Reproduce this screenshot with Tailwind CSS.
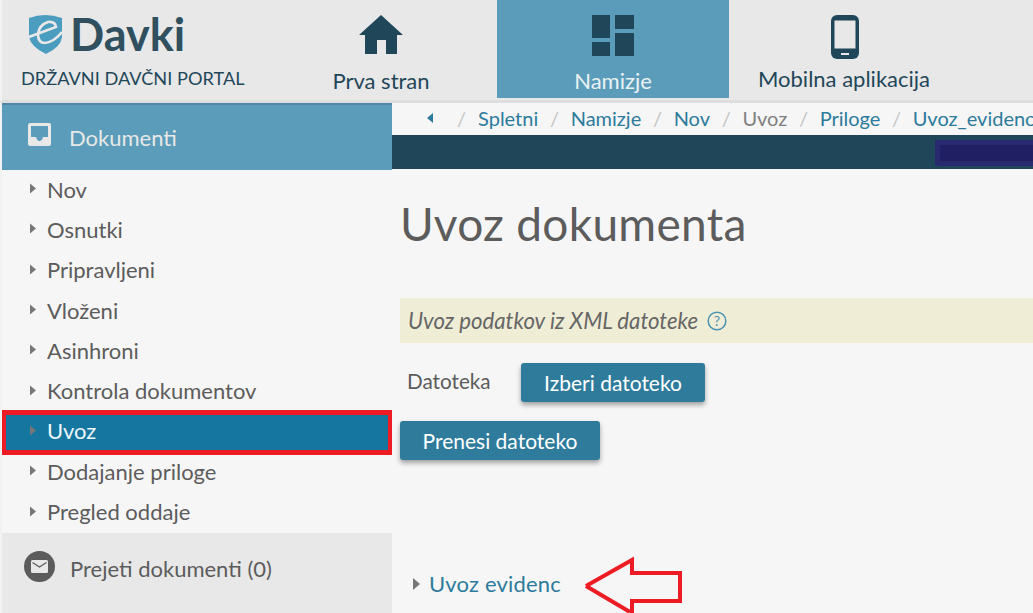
<!DOCTYPE html>
<html lang="en">
<head>
  <meta charset="UTF-8">
  <title>eDavki - Uvoz dokumenta</title>
  <script src="https://cdn.jsdelivr.net/npm/@tailwindcss/browser@4"></script>
</head>
<body class="relative w-[1033px] h-[613px] overflow-hidden bg-[#f6f6f6] font-['Lato','Noto_Sans',sans-serif] text-[#5c5c5c]">

  <!-- Header -->
  <header class="h-[103px] flex bg-[#e8e8e8] border-l-2 border-[#f2f2f2] border-b-[3px] border-b-[#dedede]">
    <div class="w-[263px] shrink-0 pl-[19px] pt-[13px]">
      <div class="flex items-center h-[42px] pl-[8px] gap-[8px]">
        <svg class="w-[33px] h-[42px]" viewBox="0 0 33 42">
          <path d="M0 5 Q16 -1 33 5 V24 Q32 34 17 41 Q2 34 0 24 Z" fill="#4a9dbf"/>
          <path d="M0 24 L27 14 Q26 8 19 9 Q10 12 9 21 Q9 30 16 30 Q25 29 33 19" fill="none" stroke="#e8e8e8" stroke-width="2.600"/>
        </svg>
        <span class="text-[45px] leading-none font-bold text-[#30505f]">Davki</span>
      </div>
      <div class="mt-[13px] text-[18.200px] leading-[20px] text-[#1f4759] whitespace-nowrap">DRŽAVNI DAVČNI PORTAL</div>
    </div>

    <a class="w-[232px] flex flex-col items-center pt-[15px] text-[#1f4759]">
      <svg class="w-[44px] h-[39px]" viewBox="0 0 44 39"><path d="M22 0 L44 20 H38 V39 H27 V25 H18 V39 H6 V20 H0 Z" fill="#1f4759"/></svg>
      <span class="mt-[13px] text-[22px] leading-[28px]">Prva stran</span>
    </a>

    <a class="w-[232px] h-[98px] flex flex-col items-center pt-[15px] bg-[#5a9cb9] text-[#eaf2f5]">
      <svg class="w-[42px] h-[41px]" viewBox="0 0 42 41" fill="#1f4759">
        <rect x="0" y="0" width="18" height="23"/><rect x="23" y="0" width="19" height="14"/>
        <rect x="0" y="27" width="18" height="14"/><rect x="23" y="18" width="19" height="23"/>
      </svg>
      <span class="mt-[11px] text-[22px] leading-[28px]">Namizje</span>
    </a>

    <a class="w-[232px] flex flex-col items-center pt-[15px] text-[#1f4759]">
      <svg class="w-[28px] h-[44px]" viewBox="0 0 28 44">
        <rect width="28" height="44" rx="6" fill="#1f4759"/>
        <rect x="3.500" y="5.500" width="21" height="28" fill="#e8e8e8"/>
        <rect x="10" y="38" width="8" height="2" fill="#e8e8e8"/>
      </svg>
      <span class="mt-[6px] text-[22px] leading-[28px] -translate-x-[1px]">Mobilna aplikacija</span>
    </a>
  </header>

  <div class="flex h-[510px]">
    <!-- Sidebar -->
    <aside class="w-[392px] shrink-0 flex flex-col border-l-2 border-[#f2f2f2]">
      <div class="h-[67px] shrink-0 flex items-center pl-[26px] gap-[18px] bg-[#5a9cb9] border-t-2 border-[#5088a3] text-[#e8e8e8]">
        <svg class="w-[23px] h-[23px] -translate-y-[3px]" viewBox="0 0 23 23">
          <rect width="23" height="23" rx="2" fill="#e8e8e8"/>
          <path d="M3 3 H20 V14 H15 Q14 18 11.500 18 Q9 18 8 14 H3 Z" fill="#5a9cb9"/>
        </svg>
        <span class="text-[22px]">Dokumenti</span>
      </div>

      <nav class="h-[363px] shrink-0 -translate-y-[1.500px] text-[22px]">
        <a class="h-[40.3px] flex items-center pl-[28px] gap-[11px]"><i class="w-0 h-0 border-y-[5px] border-y-transparent border-l-[6px] border-l-[#777]"></i>Nov</a>
        <a class="h-[40.3px] flex items-center pl-[28px] gap-[11px]"><i class="w-0 h-0 border-y-[5px] border-y-transparent border-l-[6px] border-l-[#777]"></i>Osnutki</a>
        <a class="h-[40.3px] flex items-center pl-[28px] gap-[11px]"><i class="w-0 h-0 border-y-[5px] border-y-transparent border-l-[6px] border-l-[#777]"></i>Pripravljeni</a>
        <a class="h-[40.3px] flex items-center pl-[28px] gap-[11px]"><i class="w-0 h-0 border-y-[5px] border-y-transparent border-l-[6px] border-l-[#777]"></i>Vloženi</a>
        <a class="h-[40.3px] flex items-center pl-[28px] gap-[11px]"><i class="w-0 h-0 border-y-[5px] border-y-transparent border-l-[6px] border-l-[#777]"></i>Asinhroni</a>
        <a class="h-[40.3px] flex items-center pl-[28px] gap-[11px]"><i class="w-0 h-0 border-y-[5px] border-y-transparent border-l-[6px] border-l-[#777]"></i>Kontrola dokumentov</a>
        <a class="h-[40.3px] flex items-center pl-[28px] gap-[11px] bg-[#15769f] text-[#eef6fa]"><i class="w-0 h-0 border-y-[5px] border-y-transparent border-l-[6px] border-l-[#777]"></i>Uvoz</a>
        <a class="h-[40.3px] flex items-center pl-[28px] gap-[11px]"><i class="w-0 h-0 border-y-[5px] border-y-transparent border-l-[6px] border-l-[#777]"></i>Dodajanje priloge</a>
        <a class="h-[40.3px] flex items-center pl-[28px] gap-[11px]"><i class="w-0 h-0 border-y-[5px] border-y-transparent border-l-[6px] border-l-[#777]"></i>Pregled oddaje</a>
      </nav>

      <div class="flex-1 bg-[#e8e8e8] pl-[22px] pt-[18px] flex items-start gap-[15px] text-[22px]">
        <span class="w-[31px] h-[31px] rounded-full bg-[#5c5c5c] flex items-center justify-center">
          <svg class="w-[17px] h-[13px]" viewBox="0 0 17 13">
            <rect width="17" height="13" rx="1.500" fill="#e8e8e8"/>
            <path d="M1.500 2.500 L8.500 7 L15.500 2.500" fill="none" stroke="#5c5c5c" stroke-width="1.300"/>
          </svg>
        </span>
        <span class="leading-[36px]">Prejeti dokumenti (0)</span>
      </div>
    </aside>

    <!-- Main -->
    <main class="flex-1 min-w-0">
      <div class="h-[32px] pb-[2px] flex items-center pl-[35px] text-[20px] whitespace-nowrap text-[#2d7b9c] bg-[#f6f6f6] overflow-hidden">
        <i class="w-0 h-0 border-y-[5px] border-y-transparent border-r-[6px] border-r-[#2d7b9c] mr-[24px]"></i>
        <span class="text-[#c4c4c4] mr-[12px]">/</span>Spletni
        <span class="text-[#c4c4c4] mx-[11.700px]">/</span>Namizje
        <span class="text-[#c4c4c4] mx-[11.700px]">/</span>Nov
        <span class="text-[#c4c4c4] mx-[11.700px]">/</span><span class="text-[#808080]">Uvoz</span>
        <span class="text-[#c4c4c4] mx-[11.700px]">/</span>Priloge
        <span class="text-[#c4c4c4] mx-[11.700px]">/</span>Uvoz_evidenc
      </div>
      <div class="h-[34px] bg-[#1f4759] flex justify-end pt-[5px]">
        <div class="w-[98px] h-[26px] bg-[#201f63] border-[5px] border-r-0 border-[#29296f]"></div>
      </div>

      <h1 class="ml-[8px] mt-[28px] text-[46px] leading-[54px] tracking-[0.3px] text-[#5c5c5c]">Uvoz dokumenta</h1>

      <div class="ml-[8px] mt-[47px] h-[45px] bg-[#f0edd6] flex items-center pl-[8px] text-[22.200px] italic text-[#666] gap-[9px]">
        Uvoz podatkov iz XML datoteke
        <svg class="w-[20px] h-[20px]" viewBox="0 0 20 20">
          <circle cx="10" cy="10" r="8.800" fill="none" stroke="#4a93b3" stroke-width="1.500"/>
          <text x="10" y="15" text-anchor="middle" font-size="14" font-style="normal" fill="#4a93b3">?</text>
        </svg>
      </div>

      <div class="ml-[15px] mt-[20px] flex items-start">
        <span class="w-[114px] text-[20.700px] leading-[36px]">Datoteka</span>
        <button class="w-[184px] h-[39px] rounded-[3px] bg-[#2e7b9c] text-white text-[21px] shadow-[0_3px_5px_rgba(0,0,0,0.35)]">Izberi datoteko</button>
      </div>
      <button class="block ml-[8px] mt-[19px] w-[200px] h-[39px] rounded-[3px] bg-[#2e7b9c] text-white text-[21px] shadow-[0_3px_5px_rgba(0,0,0,0.35)]">Prenesi datoteko</button>

      <div class="ml-[21px] mt-[107px] flex items-center gap-[9px] text-[22px] text-[#2d7b9c] tracking-[0.2px]">
        <i class="w-0 h-0 border-y-[6px] border-y-transparent border-l-[7px] border-l-[#777]"></i>Uvoz evidenc
      </div>
    </main>
  </div>

  <!-- Annotations drawn over the screenshot -->
  <div class="absolute left-[2px] top-[410px] w-[390px] h-[45px] border-x-[4px] border-y-[5px] border-[#ed1c24]"></div>
  <svg class="absolute left-[580px] top-[555px] w-[106px] h-[58px]" viewBox="0 0 106 58">
    <path d="M6 31 L52 5 V18 H100 V46 H52 V58" fill="none" stroke="#ed1c24" stroke-width="4"/>
    <path d="M6 31 L50 57" fill="none" stroke="#ed1c24" stroke-width="4"/>
  </svg>
</body>
</html>
